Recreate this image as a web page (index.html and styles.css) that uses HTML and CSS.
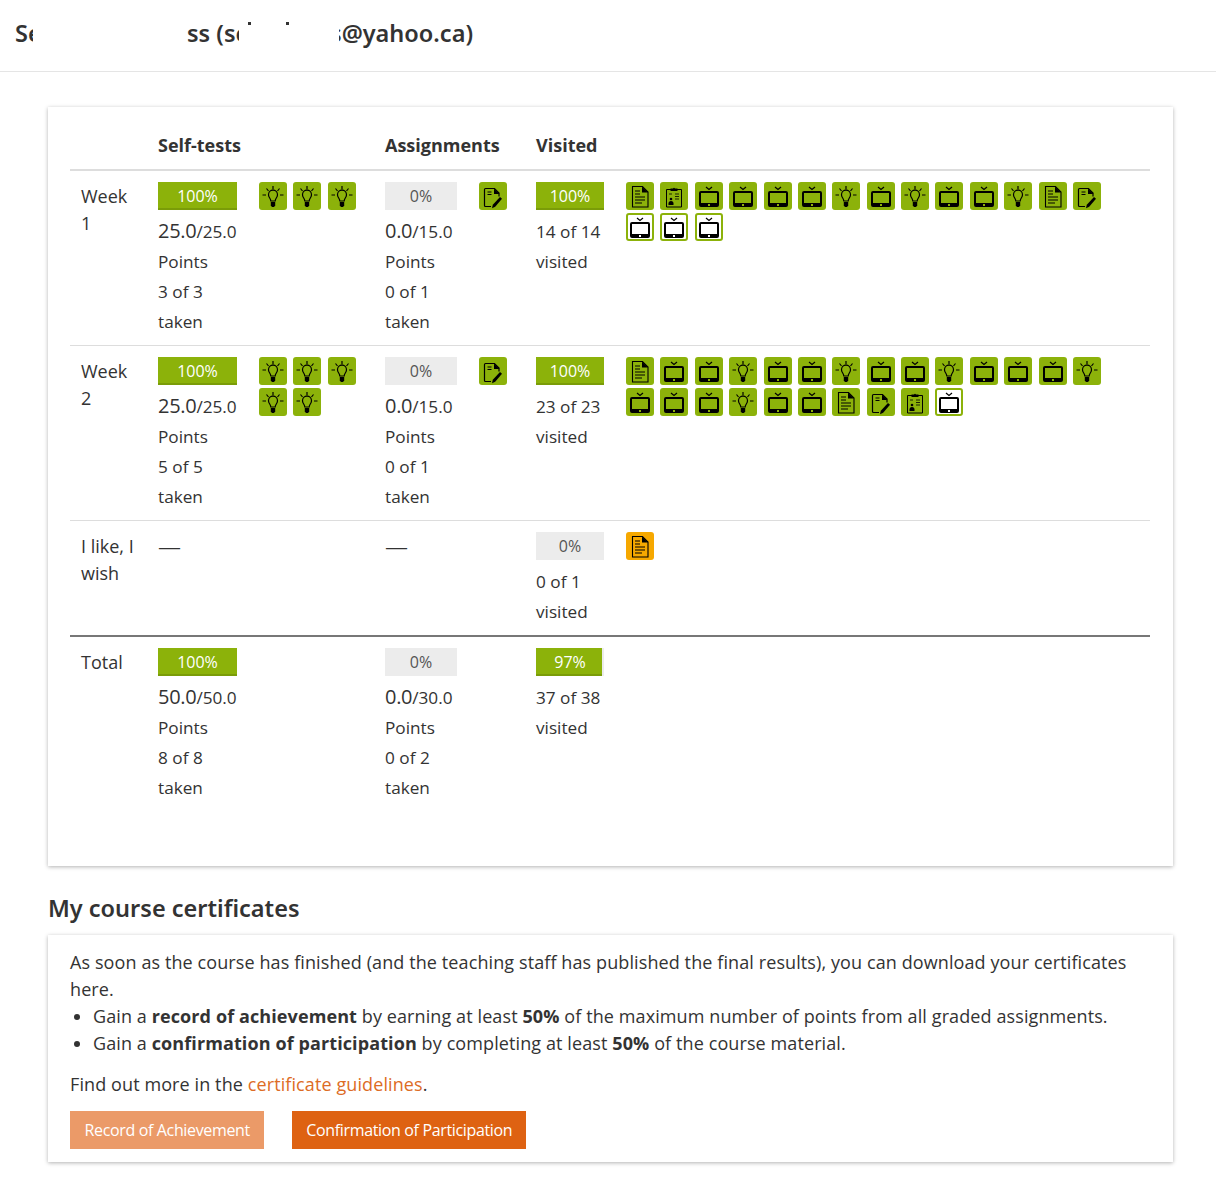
FILE: index.html
```html
<!DOCTYPE html>
<html lang="en">
<head>
  <meta charset="UTF-8">
  <title>Progress</title>
  <link rel="stylesheet" href="styles.css">
</head>
<body>

<!-- icon set, used through <use> below -->
<svg class="sprite" xmlns="http://www.w3.org/2000/svg">
  <symbol id="tv" viewBox="0 0 28 28">
    <path d="M11 5l3 2.500L17 5" fill="none" stroke="#000" stroke-width="1.200"/>
    <path fill-rule="evenodd" d="M6 9h16a2 2 0 0 1 2 2v12a2 2 0 0 1-2 2H6a2 2 0 0 1-2-2V11a2 2 0 0 1 2-2zM6 11v10h16V11zM13 22v2h2v-2z"/>
  </symbol>
  <symbol id="bulb" viewBox="0 0 28 28">
    <g fill="none" stroke="#000" stroke-width="1.200">
      <path d="M14 4v3.500M7.500 6.500l2 2.500M20.500 6.500l-2 2.500M3.500 13H7M21 13h3.500"/>
      <path d="M11.800 19c0-2.500-2.300-3.500-2.300-6.300a4.500 4.500 0 0 1 9 0c0 2.800-2.300 3.800-2.300 6.300z"/>
    </g>
    <path d="M11.800 20h4.400v3.500l-1.200 1.500h-2l-1.200-1.500z"/>
  </symbol>
  <symbol id="doc" viewBox="0 0 28 28">
    <path d="M6.500 4.500h10l5.500 5.500v15H6.500z" fill="none" stroke="#000" stroke-width="1.100"/>
    <path d="M16 4.500l6 6h-6z"/>
    <path d="M9 9h5M9 12h5M9 15h10M9 18h10M9 21h7" stroke="#000" stroke-width="1.100"/>
  </symbol>
  <symbol id="clip" viewBox="0 0 28 28">
    <path d="M6.500 7.500h15v17.500h-15z" fill="none" stroke="#000" stroke-width="1"/>
    <path d="M10.500 6.500h2.500a1.200 1.200 0 0 1 2 0h2.500v2.500h-7z"/>
    <circle cx="11" cy="17" r="1.300"/>
    <path d="M8.500 23v-1.500a2.500 2.500 0 0 1 5 0V23z"/>
    <path d="M15 12h4M9 12h3M15 14.500h4M15 17h4" stroke="#000" stroke-width=".8"/>
  </symbol>
  <symbol id="edit" viewBox="0 0 28 28">
    <path d="M12 24.500H6.500a1 1 0 0 1-1-1V7.500a1 1 0 0 1 1-1h9l4.500 4.500v3.500" fill="none" stroke="#000" stroke-width="1.200"/>
    <path d="M15 6.500l5.500 5.500H15z"/>
    <path d="M8.500 10h4M8.500 12.500h4" stroke="#000" stroke-width="1"/>
    <path d="M21 15l2 1.700-6.800 8-3.200 1.600.8-3.500z"/>
  </symbol>
</svg>

<header class="topbar">
  <h1 class="title">
    <span class="frag frag-a">Self</span>
    <span class="frag frag-b">ss (sel</span>
    <span class="speck speck-a"></span>
    <span class="speck speck-b"></span>
    <span class="frag frag-c"><span>as@yahoo.ca)</span></span>
  </h1>
</header>

<main class="content">

  <section class="card">
    <table class="progress">
      <colgroup>
        <col class="col-name"><col class="col-self"><col class="col-self-items">
        <col class="col-asg"><col class="col-asg-items">
        <col class="col-vis"><col>
      </colgroup>
      <thead>
        <tr>
          <th></th>
          <th colspan="2">Self-tests</th>
          <th colspan="2">Assignments</th>
          <th colspan="2">Visited</th>
        </tr>
      </thead>
      <tbody>
        <tr>
          <td class="name">Week 1</td>
          <td>
            <div class="bar"><div class="fill"></div><span>100%</span></div>
            <div class="stat"><span class="big">25.0</span>/25.0</div>
            <div class="stat">Points</div>
            <div class="stat">3 of 3 taken</div>
          </td>
          <td>
            <div class="items items-short">
              <span class="item"><svg><use href="#bulb"/></svg></span>
              <span class="item"><svg><use href="#bulb"/></svg></span>
              <span class="item"><svg><use href="#bulb"/></svg></span>
            </div>
          </td>
          <td>
            <div class="bar"><span class="dark">0%</span></div>
            <div class="stat"><span class="big">0.0</span>/15.0</div>
            <div class="stat">Points</div>
            <div class="stat">0 of 1 taken</div>
          </td>
          <td><div class="items"><span class="item"><svg><use href="#edit"/></svg></span></div></td>
          <td>
            <div class="bar"><div class="fill"></div><span>100%</span></div>
            <div class="stat">14 of 14 visited</div>
          </td>
          <td>
            <div class="items items-long">
              <span class="item"><svg><use href="#doc"/></svg></span>
              <span class="item"><svg><use href="#clip"/></svg></span>
              <span class="item"><svg><use href="#tv"/></svg></span>
              <span class="item"><svg><use href="#tv"/></svg></span>
              <span class="item"><svg><use href="#tv"/></svg></span>
              <span class="item"><svg><use href="#tv"/></svg></span>
              <span class="item"><svg><use href="#bulb"/></svg></span>
              <span class="item"><svg><use href="#tv"/></svg></span>
              <span class="item"><svg><use href="#bulb"/></svg></span>
              <span class="item"><svg><use href="#tv"/></svg></span>
              <span class="item"><svg><use href="#tv"/></svg></span>
              <span class="item"><svg><use href="#bulb"/></svg></span>
              <span class="item"><svg><use href="#doc"/></svg></span>
              <span class="item"><svg><use href="#edit"/></svg></span>
              <span class="item optional"><svg><use href="#tv"/></svg></span>
              <span class="item optional"><svg><use href="#tv"/></svg></span>
              <span class="item optional"><svg><use href="#tv"/></svg></span>
            </div>
          </td>
        </tr>
        <tr>
          <td class="name">Week 2</td>
          <td>
            <div class="bar"><div class="fill"></div><span>100%</span></div>
            <div class="stat"><span class="big">25.0</span>/25.0</div>
            <div class="stat">Points</div>
            <div class="stat">5 of 5 taken</div>
          </td>
          <td>
            <div class="items items-short">
              <span class="item"><svg><use href="#bulb"/></svg></span>
              <span class="item"><svg><use href="#bulb"/></svg></span>
              <span class="item"><svg><use href="#bulb"/></svg></span>
              <span class="item"><svg><use href="#bulb"/></svg></span>
              <span class="item"><svg><use href="#bulb"/></svg></span>
            </div>
          </td>
          <td>
            <div class="bar"><span class="dark">0%</span></div>
            <div class="stat"><span class="big">0.0</span>/15.0</div>
            <div class="stat">Points</div>
            <div class="stat">0 of 1 taken</div>
          </td>
          <td><div class="items"><span class="item"><svg><use href="#edit"/></svg></span></div></td>
          <td>
            <div class="bar"><div class="fill"></div><span>100%</span></div>
            <div class="stat">23 of 23 visited</div>
          </td>
          <td>
            <div class="items items-long">
              <span class="item"><svg><use href="#doc"/></svg></span>
              <span class="item"><svg><use href="#tv"/></svg></span>
              <span class="item"><svg><use href="#tv"/></svg></span>
              <span class="item"><svg><use href="#bulb"/></svg></span>
              <span class="item"><svg><use href="#tv"/></svg></span>
              <span class="item"><svg><use href="#tv"/></svg></span>
              <span class="item"><svg><use href="#bulb"/></svg></span>
              <span class="item"><svg><use href="#tv"/></svg></span>
              <span class="item"><svg><use href="#tv"/></svg></span>
              <span class="item"><svg><use href="#bulb"/></svg></span>
              <span class="item"><svg><use href="#tv"/></svg></span>
              <span class="item"><svg><use href="#tv"/></svg></span>
              <span class="item"><svg><use href="#tv"/></svg></span>
              <span class="item"><svg><use href="#bulb"/></svg></span>
              <span class="item"><svg><use href="#tv"/></svg></span>
              <span class="item"><svg><use href="#tv"/></svg></span>
              <span class="item"><svg><use href="#tv"/></svg></span>
              <span class="item"><svg><use href="#bulb"/></svg></span>
              <span class="item"><svg><use href="#tv"/></svg></span>
              <span class="item"><svg><use href="#tv"/></svg></span>
              <span class="item"><svg><use href="#doc"/></svg></span>
              <span class="item"><svg><use href="#edit"/></svg></span>
              <span class="item"><svg><use href="#clip"/></svg></span>
              <span class="item optional"><svg><use href="#tv"/></svg></span>
            </div>
          </td>
        </tr>
        <tr class="last-section">
          <td class="name">I like, I wish</td>
          <td colspan="2"><div class="none">—</div></td>
          <td colspan="2"><div class="none">—</div></td>
          <td>
            <div class="bar"><span class="dark">0%</span></div>
            <div class="stat">0 of 1 visited</div>
          </td>
          <td>
            <div class="items"><span class="item pending"><svg><use href="#doc"/></svg></span></div>
          </td>
        </tr>
        <tr class="total">
          <td class="name">Total</td>
          <td>
            <div class="bar"><div class="fill"></div><span>100%</span></div>
            <div class="stat"><span class="big">50.0</span>/50.0</div>
            <div class="stat">Points</div>
            <div class="stat">8 of 8 taken</div>
          </td>
          <td></td>
          <td>
            <div class="bar"><span class="dark">0%</span></div>
            <div class="stat"><span class="big">0.0</span>/30.0</div>
            <div class="stat">Points</div>
            <div class="stat">0 of 2 taken</div>
          </td>
          <td></td>
          <td>
            <div class="bar"><div class="fill" style="width: 97%"></div><span>97%</span></div>
            <div class="stat">37 of 38 visited</div>
          </td>
          <td></td>
        </tr>
      </tbody>
    </table>
  </section>

  <h2 class="section-title">My course certificates</h2>

  <section class="card card-certs">
    <p class="intro">As soon as the course has finished (and the teaching staff has published the final results), you can download your certificates here.</p>
    <ul class="rules">
      <li>Gain a <b>record of achievement</b> by earning at least <b>50%</b> of the maximum number of points from all graded assignments.</li>
      <li>Gain a <b>confirmation of participation</b> by completing at least <b>50%</b> of the course material.</li>
    </ul>
    <p class="more">Find out more in the <a href="#">certificate guidelines</a>.</p>
    <div class="actions">
      <a class="btn btn-muted" href="#">Record of Achievement</a>
      <a class="btn" href="#">Confirmation of Participation</a>
    </div>
  </section>

</main>

</body>
</html>
```

FILE: styles.css
```css
* {
  box-sizing: border-box;
}

html, body {
  margin: 0;
  padding: 0;
  background: #fff;
  color: #333;
  font-family: "Open Sans", sans-serif;
  font-size: 18px;
  font-weight: 400;
  line-height: 27px;
}

.sprite {
  display: none;
}

/* top bar */
.topbar {
  height: 72px;
  border-bottom: 1px solid #e5e5e5;
}

.title {
  display: flex;
  height: 66px;
  margin: 0;
  padding-left: 15px;
  align-items: center;
  font-family: "Noto Sans", sans-serif;
  font-size: 23.5px;
  font-weight: 600;
  line-height: 34px;
}

.frag {
  display: flex;
  overflow: hidden;
  white-space: nowrap;
}

.frag-a {
  width: 18px;
}

.frag-b {
  width: 52px;
  margin-left: 154px;
}

.frag-c {
  width: 134px;
  margin-left: 50px;
  justify-content: flex-end;
}

.speck {
  width: 3px;
  height: 3px;
  margin-bottom: 20px;
  background: #333;
}

.speck-a {
  margin-left: 9px;
}

.speck-b {
  margin-left: 35px;
}

/* layout */
.content {
  padding: 35px 43px 30px 48px;
}

.card {
  padding: 13px 23px 55px 22px;
  background: #fff;
  box-shadow: 0 1px 4px rgba(0, 0, 0, 0.3);
}

/* progress table */
.progress {
  width: 100%;
  border-collapse: collapse;
  table-layout: fixed;
}

.col-name { width: 77px; }
.col-self { width: 101px; }
.col-self-items { width: 126px; }
.col-asg { width: 94px; }
.col-asg-items { width: 57px; }
.col-vis { width: 90px; }

.progress th {
  padding: 12px 11px 10px;
  border-bottom: 2px solid #ddd;
  text-align: left;
  font-weight: 700;
}

.progress td {
  padding: 11px 11px 8px;
  border-bottom: 1px solid #ddd;
  vertical-align: top;
}

.progress td.name {
  padding-top: 12px;
}

.progress .last-section td {
  border-bottom: 2px solid #777;
}

.progress .total td {
  border-bottom: 0;
}

.bar {
  position: relative;
  height: 28px;
  margin-bottom: 7px;
  background: #ececec;
  color: #fff;
  font-size: 16px;
  line-height: 28px;
  text-align: center;
}

.bar span {
  position: relative;
}

.bar .dark {
  color: #555;
}

.fill {
  position: absolute;
  top: 0;
  left: 0;
  width: 100%;
  height: 100%;
  background: #8cb20a;
  border-bottom: 2px solid #7a9c08;
}

.stat {
  font-size: 17.2px;
  line-height: 30px;
}

.big {
  font-size: 20px;
  line-height: 1;
  letter-spacing: -0.3px;
}

.none {
  margin-top: 2px;
  font-size: 23px;
  font-weight: 300;
  line-height: 25px;
}

/* item tiles */
.items {
  display: flex;
  flex-wrap: wrap;
  gap: 3px 6.38px;
}

.items-short {
  width: 104px;
}

.items-long {
  width: 490px;
}

.item {
  display: block;
  width: 28px;
  height: 28px;
  background: #8cb20a;
  border-radius: 3px;
}

.item svg {
  display: block;
  width: 28px;
  height: 28px;
}

.item.optional {
  background: #fff;
  border: 2px solid #8cb20a;
}

.item.optional svg {
  margin: -2px;
}

.item.pending {
  background: #f6a800;
}

/* certificates */
.section-title {
  margin: 25px 0 10px;
  font-family: "Noto Sans", sans-serif;
  font-size: 23.5px;
  font-weight: 600;
  line-height: 34px;
}

.card-certs {
  padding: 14px 22px 13px;
  letter-spacing: 0.1px;
}

.intro {
  margin: 0;
}

.rules {
  margin: 0;
  padding-left: 23px;
}

.more {
  margin: 14px 0 13px;
}

.more a {
  color: #dd6c25;
  text-decoration: none;
}

.actions {
  display: flex;
  gap: 28px;
}

.btn {
  display: block;
  height: 38px;
  padding: 0 14px;
  background: #de6212;
  color: #fff;
  font-size: 16px;
  line-height: 38px;
  letter-spacing: -0.35px;
  text-decoration: none;
}

.btn-muted {
  padding: 0 14.5px;
  background: #eb9a68;
}
```
